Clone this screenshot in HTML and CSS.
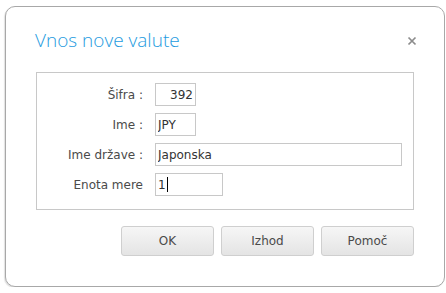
FILE: index.html
```html
<!DOCTYPE html>
<html lang="sl">

<head>
  <meta charset="UTF-8">
  <title>Vnos nove valute</title>
  <link rel="stylesheet" href="styles.css">
</head>

<body>
  <div class="dialog">
    <div class="dialog-head">
      <h1 class="dialog-title">Vnos nove valute</h1>
      <svg class="close" width="10" height="10" viewBox="0 0 10 10">
        <path d="M1.5 1.5 L8.5 8.5 M8.5 1.5 L1.5 8.5" stroke="#8c8c8c" stroke-width="1.7" />
      </svg>
    </div>

    <div class="panel">
      <form class="fields">
        <label for="sifra">Šifra :</label>
        <input id="sifra" class="w-short num" type="text" value="392">

        <label for="ime">Ime :</label>
        <input id="ime" class="w-short" type="text" value="JPY">

        <label for="drzava">Ime države :</label>
        <input id="drzava" class="w-long" type="text" value="Japonska">

        <label for="enota">Enota mere</label>
        <div class="caret-box w-mid">1<span class="caret"></span></div>
      </form>
    </div>

    <div class="buttons">
      <button type="button">OK</button>
      <button type="button">Izhod</button>
      <button type="button">Pomoč</button>
    </div>
  </div>
</body>

</html>
```

FILE: styles.css
```css
body {
  margin: 0;
  padding: 0;
  background: #fff;
  font-family: "DejaVu Sans", Verdana, sans-serif;
  font-size: 12px;
  color: #4a4a4a;
}

.dialog {
  box-sizing: border-box;
  width: 440px;
  height: 281px;
  margin: 6px 0 0 5px;
  padding: 0 30px;
  border: 1px solid #a8a8a8;
  border-radius: 10px;
  box-shadow: -1px 1px 1px rgba(0, 0, 0, 0.12);
  background: #fff;
}

.dialog-head {
  display: flex;
  align-items: center;
  justify-content: space-between;
  height: 65px;
}

.dialog-title {
  margin: 0 0 0 -1px;
  font-family: "Open Sans", sans-serif;
  font-weight: 300;
  font-size: 19px;
  color: #1e9be0;
}

.close {
  margin: 2px -3px 0 0;
}

.panel {
  box-sizing: border-box;
  height: 138px;
  padding-top: 10px;
  border: 1px solid #c8c8c8;
}

.fields {
  display: grid;
  grid-template-columns: 106px auto;
  column-gap: 12px;
  row-gap: 7px;
  align-items: center;
  justify-items: start;
}

.fields label {
  justify-self: end;
}

.fields input,
.caret-box {
  box-sizing: border-box;
  height: 23px;
  padding: 0 2px;
  border: 1px solid #c8c8c8;
  font-family: inherit;
  font-size: 12px;
  color: #333;
  outline: none;
}

.caret-box {
  display: flex;
  align-items: center;
}

.caret {
  display: inline-block;
  width: 1px;
  height: 15px;
  margin-left: 1px;
  background: #000;
}

.w-short {
  width: 41px;
}

.w-mid {
  width: 68px;
}

.w-long {
  width: 247px;
}

.num {
  text-align: right;
}

.buttons {
  display: flex;
  justify-content: flex-end;
  gap: 7px;
  margin-top: 16px;
}

.buttons button {
  width: 93px;
  height: 30px;
  border: 1px solid #cfcfcf;
  border-radius: 3px;
  background: linear-gradient(#f6f6f6, #e4e4e4);
  font-family: inherit;
  font-size: 12px;
  color: #4a4a4a;
}
```
